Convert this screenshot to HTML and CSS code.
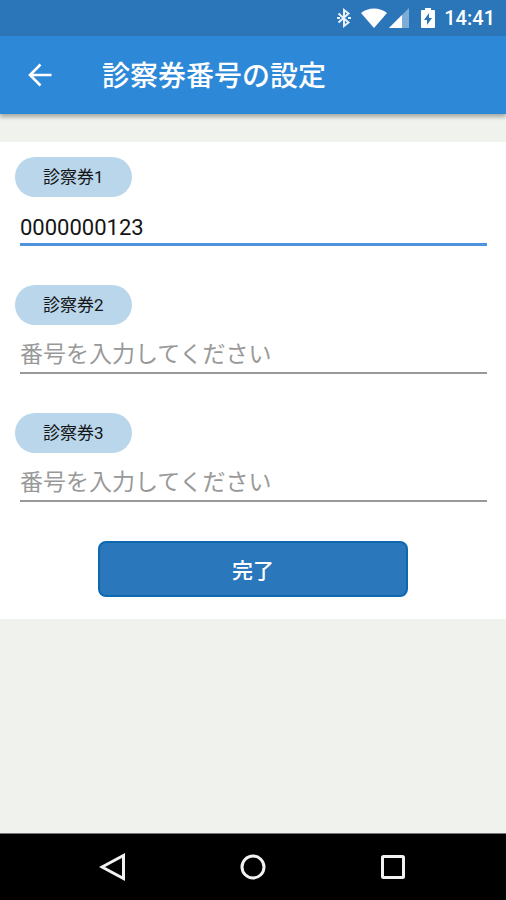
FILE: index.html
```html
<!DOCTYPE html>
<html lang="ja">
<head>
<meta charset="utf-8">
<meta name="viewport" content="width=device-width, initial-scale=1">
<title>診察券番号の設定</title>
<link rel="stylesheet" href="styles.css">
</head>
<body>
<div class="status-bar">
  <svg class="bluetooth" width="14" height="20" viewBox="0 0 14 20" aria-hidden="true"><path d="M1.500 5.500 11.500 14.500 7 18V2l4.500 3.500-10 9" fill="none" stroke="currentColor" stroke-width="2"/><path d="M0 10h3M11 10h3" stroke="currentColor" stroke-width="2"/></svg>
  <svg class="wifi" width="26" height="20" viewBox="0 0 26 20" aria-hidden="true"><path d="M0 5C7-1 19-1 26 5L13 20Z" fill="currentColor"/></svg>
  <svg class="signal" width="20" height="20" viewBox="0 0 20 20" aria-hidden="true"><path d="M20 0v20H0Z" fill="currentColor" opacity=".4"/><path d="M13 7v13H0Z" fill="currentColor"/></svg>
  <svg class="battery" width="14" height="20" viewBox="0 0 14 20" aria-hidden="true"><path fill="currentColor" fill-rule="evenodd" d="M4 0h6v2h3q1 0 1 1v16q0 1-1 1H1q-1 0-1-1V3q0-1 1-1h3ZM8 5 3 12h3v5l5-7H8Z"/></svg>
  <time class="clock">14:41</time>
</div>
<header class="app-bar">
  <button class="back" type="button" aria-label="戻る"><svg width="24" height="24" viewBox="0 0 24 24" aria-hidden="true"><path d="M23.500 12H2.500M12.500 1.500 2 12l10.500 10.500" fill="none" stroke="currentColor" stroke-width="2.600"/></svg></button>
  <h1 class="title">診察券番号の設定</h1>
</header>
<main class="content">
  <form class="card">
    <div class="field">
      <label class="chip" for="card1">診察券1</label>
      <input class="number active" id="card1" type="text" inputmode="numeric" value="0000000123" placeholder="番号を入力してください">
    </div>
    <div class="field">
      <label class="chip" for="card2">診察券2</label>
      <input class="number" id="card2" type="text" inputmode="numeric" placeholder="番号を入力してください">
    </div>
    <div class="field">
      <label class="chip" for="card3">診察券3</label>
      <input class="number" id="card3" type="text" inputmode="numeric" placeholder="番号を入力してください">
    </div>
    <button class="submit" type="button">完了</button>
  </form>
</main>
<nav class="nav-bar">
  <button class="nav-key" type="button" aria-label="戻る"><svg width="28" height="28" viewBox="0 0 28 28" aria-hidden="true"><path d="M24.500 2.500v23L3 14Z"/></svg></button>
  <button class="nav-key" type="button" aria-label="ホーム"><svg width="28" height="28" viewBox="0 0 28 28" aria-hidden="true"><circle cx="14" cy="14" r="11"/></svg></button>
  <button class="nav-key" type="button" aria-label="履歴"><svg width="28" height="28" viewBox="0 0 28 28" aria-hidden="true"><rect x="3.500" y="3.500" width="21" height="21" rx="1"/></svg></button>
</nav>
</body>
</html>
```
FILE: styles.css
```css
* {
  box-sizing: border-box;
}

body {
  margin: 0;
  min-height: 100vh;
  display: flex;
  flex-direction: column;
  background: #f0f2ed;
  color: #151515;
  font-family: Roboto, "Noto Sans CJK JP", sans-serif;
}

button,
input {
  font-family: inherit;
  border: 0;
  padding: 0;
}

svg {
  display: block;
}

.status-bar {
  height: 36px;
  padding: 0 11px;
  display: flex;
  align-items: center;
  justify-content: flex-end;
  background: #2b76b9;
  color: #fff;
}

.bluetooth {
  margin-right: 10px;
  opacity: .9;
}

.wifi {
  margin-right: 2px;
}

.signal {
  margin-right: 12px;
}

.battery {
  margin-right: 9px;
}

.clock {
  font-size: 20px;
  font-weight: 500;
  line-height: 38px;
}

.app-bar {
  height: 78px;
  padding: 0 28px;
  display: flex;
  align-items: center;
  gap: 50px;
  background: #2d88d8;
  color: #fff;
  box-shadow: 0 3px 4px rgba(0, 0, 0, .3);
}

.back {
  background: none;
  color: inherit;
}

.title {
  margin: 0;
  padding-top: 3px;
  font-size: 28px;
  font-weight: 500;
  line-height: 40px;
}

.content {
  flex: 1;
  padding: 28px 0;
}

.card {
  padding: 15px 15px 22px;
  display: flex;
  flex-direction: column;
  gap: 39px;
  background: #fff;
}

.field {
  display: flex;
  flex-direction: column;
  align-items: flex-start;
}

.chip {
  padding: 0 28px;
  border-radius: 20px;
  background: #bad6eb;
  font-size: 17px;
  line-height: 40px;
}

.number {
  align-self: stretch;
  height: 49px;
  margin: 0 4px 0 5px;
  padding-top: 12px;
  border-bottom: 2px solid #999;
  background: none;
  color: #151515;
  font-size: 22px;
  outline: none;
}

.number.active {
  padding-top: 14px;
  border-bottom: 3px solid #4f93dc;
}

.number::placeholder {
  color: #999;
  font-size: 23px;
}

.submit {
  align-self: center;
  width: 65%;
  height: 56px;
  border: 2px solid #0e68b0;
  border-radius: 8px;
  background: #2b77bb;
  color: #fff;
  font-size: 21px;
  font-weight: 500;
}

.nav-bar {
  height: 67px;
  padding: 0 43px;
  display: flex;
  align-items: center;
  justify-content: space-around;
  border-top: 1px solid #777;
  background: #000;
}

.nav-key {
  background: none;
}

.nav-key svg {
  fill: none;
  stroke: #f2f2f2;
  stroke-width: 3;
}
```
